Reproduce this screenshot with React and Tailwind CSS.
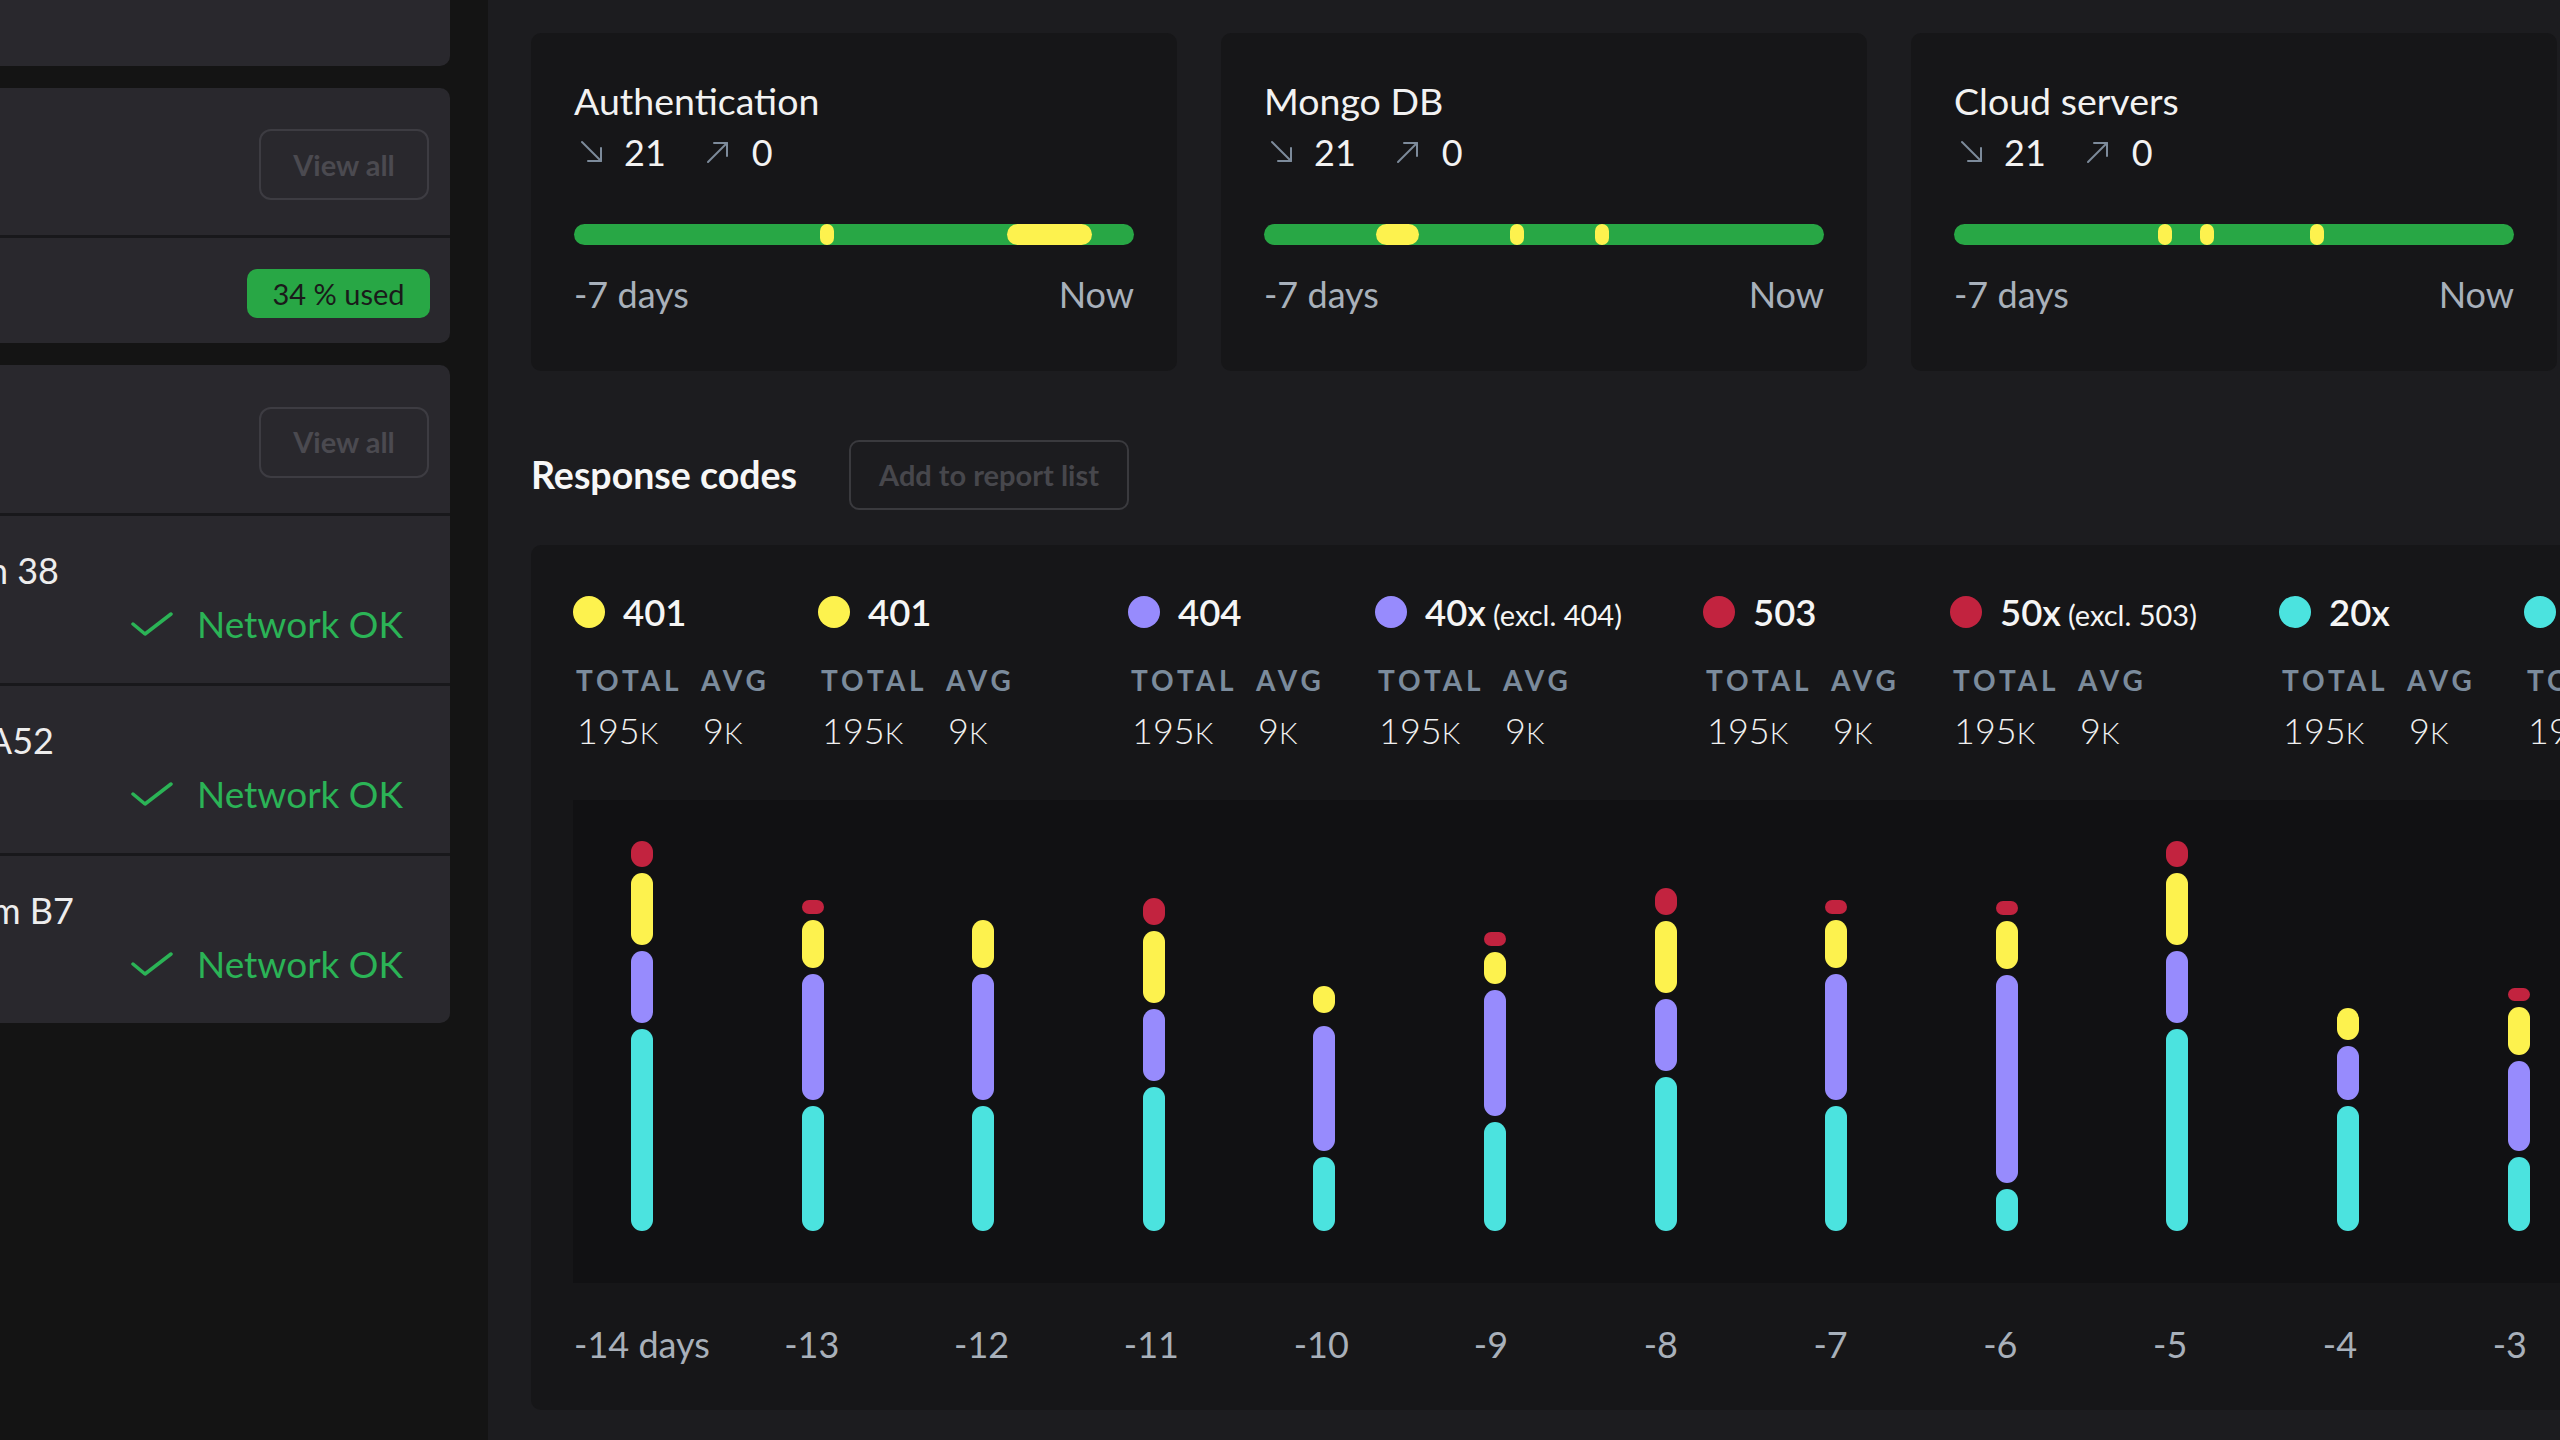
import React from "react";

const YELLOW = "#fdf24e";
const PURPLE = "#978bfd";
const RED = "#c2233f";
const CYAN = "#4be3df";

const services = [
  {
    name: "Authentication",
    marks: [
      { left: 246, width: 14 },
      { left: 433, width: 85 },
    ],
  },
  {
    name: "Mongo DB",
    marks: [
      { left: 112, width: 43 },
      { left: 246, width: 14 },
      { left: 331, width: 14 },
    ],
  },
  {
    name: "Cloud servers",
    marks: [
      { left: 204, width: 14 },
      { left: 246, width: 14 },
      { left: 356, width: 14 },
    ],
  },
];

const legend = [
  { color: YELLOW, code: "401", w: "w-[245px]" },
  { color: YELLOW, code: "401", w: "w-[310px]" },
  { color: PURPLE, code: "404", w: "w-[247px]" },
  { color: PURPLE, code: "40x", note: "(excl. 404)", w: "w-[328px]" },
  { color: RED, code: "503", w: "w-[247px]" },
  { color: RED, code: "50x", note: "(excl. 503)", w: "w-[329px]" },
  { color: CYAN, code: "20x", w: "w-[245px]" },
  { color: CYAN, code: "200", w: "w-[245px]" },
];

// segments from top to bottom: [color, height]
const bars = [
  { label: "-14 days", segs: [[RED, 26], [YELLOW, 72], [PURPLE, 72], [CYAN, 202]] },
  { label: "-13", segs: [[RED, 14], [YELLOW, 48], [PURPLE, 126], [CYAN, 125]] },
  { label: "-12", segs: [[YELLOW, 48], [PURPLE, 126], [CYAN, 125]] },
  { label: "-11", segs: [[RED, 27], [YELLOW, 72], [PURPLE, 72], [CYAN, 144]] },
  { label: "-10", segs: [[YELLOW, 27], ["transparent", 1], [PURPLE, 125], [CYAN, 74]] },
  { label: "-9", segs: [[RED, 14], [YELLOW, 32], [PURPLE, 126], [CYAN, 109]] },
  { label: "-8", segs: [[RED, 27], [YELLOW, 72], [PURPLE, 72], [CYAN, 154]] },
  { label: "-7", segs: [[RED, 14], [YELLOW, 48], [PURPLE, 126], [CYAN, 125]] },
  { label: "-6", segs: [[RED, 14], [YELLOW, 48], [PURPLE, 208], [CYAN, 42]] },
  { label: "-5", segs: [[RED, 26], [YELLOW, 72], [PURPLE, 72], [CYAN, 202]] },
  { label: "-4", segs: [[YELLOW, 32], [PURPLE, 54], [CYAN, 125]] },
  { label: "-3", segs: [[RED, 13], [YELLOW, 48], [PURPLE, 90], [CYAN, 74]] },
  { label: "-2", segs: [[RED, 14], [YELLOW, 48], [PURPLE, 126], [CYAN, 125]] },
];

const stations = [
  { name: "Station 38", w: "w-[59px]" },
  { name: "Gateway A52", w: "w-[54px]" },
  { name: "Platform B7", w: "w-[74px]" },
];

const Arrow = ({ up }) => (
  <svg width="24" height="24" viewBox="0 0 24 24" fill="none" stroke="#7d8b9b" strokeWidth="2" strokeLinecap="round" strokeLinejoin="round">
    {up ? (
      <>
        <path d="M2 22 L21 3" />
        <path d="M8 3 H21 V16" />
      </>
    ) : (
      <>
        <path d="M2 2 L21 21" />
        <path d="M21 8 V21 H8" />
      </>
    )}
  </svg>
);

const Check = () => (
  <svg width="42" height="26" viewBox="0 0 42 26" fill="none" stroke="#2bb356" strokeWidth="3.5" strokeLinecap="round" strokeLinejoin="round">
    <polyline points="2,13 14,23 40,3" />
  </svg>
);

const ViewAll = () => (
  <button className="w-[170px] h-[71px] border-2 border-[#3d3c42] rounded-[12px] text-[29px] font-bold text-[#4b4a50]">
    View all
  </button>
);

const ServiceCard = ({ service }) => (
  <div className="w-[646px] h-[338px] shrink-0 bg-[#161618] rounded-[10px] px-[43px] pt-[46px]">
    <div className="text-[37.5px] leading-[44px] text-[#f2f2f2]">{service.name}</div>
    <div className="mt-[7px] h-[44px] flex items-center pl-[6px] text-[36px] text-[#f2f2f2]">
      <Arrow />
      <span className="ml-[20px]">21</span>
      <span className="ml-[40px]">
        <Arrow up />
      </span>
      <span className="ml-[22px]">0</span>
    </div>
    <div className="mt-[50px] relative h-[21px] rounded-full bg-[#28a745]">
      {service.marks.map((m, i) => (
        <div
          key={i}
          className="absolute top-0 h-[21px] rounded-full"
          style={{ left: m.left, width: m.width, background: YELLOW }}
        />
      ))}
    </div>
    <div className="mt-[27px] flex justify-between text-[36px] leading-[44px] text-[#a8b0ba]">
      <span>-7 days</span>
      <span>Now</span>
    </div>
  </div>
);

const LegendItem = ({ item }) => (
  <div className={`${item.w} shrink-0 flex flex-col`}>
    <div className="h-[44px] flex items-center">
      <span className="w-[32px] h-[32px] rounded-full shrink-0" style={{ background: item.color }} />
      <span className="ml-[18px] text-[36.5px] font-semibold text-[#f5f5f5] whitespace-nowrap">
        {item.code}
        {item.note && <span className="ml-[7px] text-[29px] font-normal">{item.note}</span>}
      </span>
    </div>
    <div className="mt-[28px] h-[36px] flex items-center text-[28px] font-bold tracking-[0.14em] text-[#7b8b9c]">
      <span className="w-[128px] shrink-0 pl-[3px]">TOTAL</span>
      <span>AVG</span>
    </div>
    <div className="mt-[10px] h-[44px] flex items-center text-[#f0f0f0] font-light">
      <span className="w-[128px] shrink-0 pl-[4px] whitespace-nowrap">
        <span className="text-[36px]">195</span>
        <span className="text-[29px]">K</span>
      </span>
      <span className="whitespace-nowrap pl-[2px]">
        <span className="text-[36px]">9</span>
        <span className="text-[29px]">K</span>
      </span>
    </div>
  </div>
);

export default function App() {
  return (
    <div className="flex w-[2560px] h-[1440px] overflow-hidden bg-[#1c1c1f] font-['Lato',sans-serif]">
      {/* Sidebar */}
      <aside className="w-[488px] shrink-0 bg-[#141414] pr-[38px] flex flex-col gap-[22px]">
        <div className="h-[66px] bg-[#29282d] rounded-br-[10px]" />

        <div className="bg-[#29282d] rounded-r-[10px]">
          <div className="h-[147px] flex items-center justify-end pr-[21px] pt-[6px]">
            <ViewAll />
          </div>
          <div className="h-[3px] bg-[#18181b]" />
          <div className="h-[105px] flex items-center justify-end pr-[20px] pt-[6px]">
            <span className="w-[183px] h-[49px] rounded-[10px] bg-[#28a745] flex items-center justify-center text-[29px] text-[#1a1a1a]">
              34 % used
            </span>
          </div>
        </div>

        <div className="bg-[#29282d] rounded-r-[10px]">
          <div className="h-[148px] flex items-center justify-end pr-[21px] pt-[6px]">
            <ViewAll />
          </div>
          {stations.map((s) => (
            <div key={s.name}>
              <div className="h-[3px] bg-[#18181b]" />
              <div className="h-[167px] pt-[32px] flex flex-col">
                <div className={`${s.w} h-[44px] flex justify-end overflow-hidden`}>
                  <span className="whitespace-nowrap text-[36px] leading-[44px] text-[#ededed]">{s.name}</span>
                </div>
                <div className="mt-[10px] h-[44px] flex items-center justify-end pr-[47px] gap-[24px]">
                  <Check />
                  <span className="text-[37px] leading-[44px] text-[#2bb356]">Network OK</span>
                </div>
              </div>
            </div>
          ))}
        </div>
      </aside>

      {/* Main */}
      <main className="flex-1 min-w-0 pl-[43px] pt-[33px] flex flex-col">
        <div className="flex gap-[44px]">
          {services.map((s) => (
            <ServiceCard key={s.name} service={s} />
          ))}
        </div>

        <div className="mt-[69px] h-[70px] flex items-center gap-[52px]">
          <h2 className="text-[37.5px] font-bold text-[#f7f7f7]">Response codes</h2>
          <button className="h-[70px] px-[28px] border-2 border-[#3a3a3e] rounded-[10px] text-[29px] font-bold text-[#47474c]">
            Add to report list
          </button>
        </div>

        <div className="mt-[35px] w-[2200px] shrink-0 bg-[#161618] rounded-l-[10px] pt-[45px] pl-[42px] pb-[44px]">
          <div className="flex">
            {legend.map((item, i) => (
              <LegendItem key={i} item={item} />
            ))}
          </div>

          <div className="mt-[48px] h-[483px] bg-[#111113] flex items-end pb-[52px] pl-[58px] gap-[148.6px]">
            {bars.map((b, i) => (
              <div key={i} className="w-[22px] shrink-0 flex flex-col gap-[6px]">
                {b.segs.map(([color, h], j) => (
                  <div key={j} className="w-[22px] rounded-full" style={{ height: h, background: color }} />
                ))}
              </div>
            ))}
          </div>

          <div className="mt-[39px] flex pl-[58px] gap-[147.8px]">
            {bars.map((b, i) => (
              <div key={i} className="w-[22px] shrink-0 flex justify-center">
                <span className="whitespace-nowrap text-[36px] leading-[44px] text-[#a8b0ba]">{b.label}</span>
              </div>
            ))}
          </div>
        </div>
      </main>
    </div>
  );
}
